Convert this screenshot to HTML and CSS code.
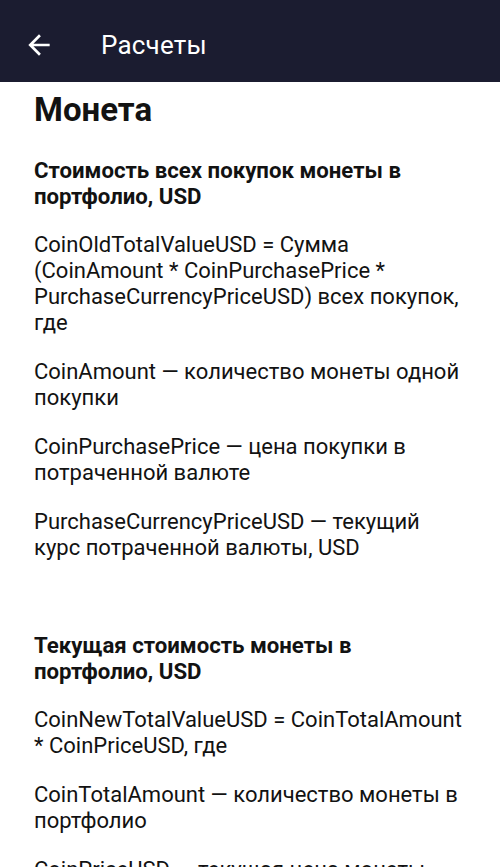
FILE: index.html
```html
<!DOCTYPE html>
<html lang="ru">
<head>
<meta charset="utf-8">
<link rel="stylesheet" href="styles.css">
</head>
<body>
<header class="bar">
  <svg class="back" width="24" height="24" viewBox="0 0 24 24"><path d="M20 11H7.83l5.59-5.59L12 4l-8 8 8 8 1.41-1.41L7.83 13H20v-2z" fill="#fff"/></svg>
  <span class="title">Расчеты</span>
</header>
<main class="content">
  <h1 class="h1">Монета</h1>
  <section class="sec">
    <h2 class="h2">Стоимость всех покупок монеты в портфолио, USD</h2>
    <p class="p">CoinOldTotalValueUSD = Сумма (CoinAmount * CoinPurchasePrice * PurchaseCurrencyPriceUSD) всех покупок, где</p>
    <p class="p">CoinAmount — количество монеты одной покупки</p>
    <p class="p">CoinPurchasePrice — цена покупки в потраченной валюте</p>
    <p class="p">PurchaseCurrencyPriceUSD — текущий курс потраченной валюты, USD</p>
  </section>
  <section class="sec sec2">
    <h2 class="h2">Текущая стоимость монеты в портфолио, USD</h2>
    <p class="p">CoinNewTotalValueUSD = CoinTotalAmount * CoinPriceUSD, где</p>
    <p class="p">CoinTotalAmount — количество монеты в портфолио</p>
    <p class="p">CoinPriceUSD — текущая цена монеты, USD</p>
  </section>
</main>
</body>
</html>
```
FILE: styles.css
```css
html, body { margin: 0; padding: 0; background: #fff; }
body { font-family: Roboto, "Noto Sans", sans-serif; color: #121212; width: 500px; height: 867px; overflow: hidden; }
.bar { height: 82px; background: #1b1c30; display: flex; align-items: center; box-sizing: border-box; padding: 8px 0 0 23px; }
.back { width: 32px; height: 32px; flex: none; }
.title { color: #fff; font-size: 26px; margin-left: 46px; letter-spacing: 0.2px; }
.content { width: 432px; padding: 0 0 0 34px; }
.h1 { font-size: 33px; font-weight: 700; margin: 8px 0 0; line-height: 40px; }
.sec { margin-top: 27px; }
.sec2 { margin-top: 71px; }
.h2 { font-size: 22.2px; font-weight: 700; line-height: 26px; margin: 0; }
.p { font-size: 22px; line-height: 26px; margin: 23px 0 0; }
```
